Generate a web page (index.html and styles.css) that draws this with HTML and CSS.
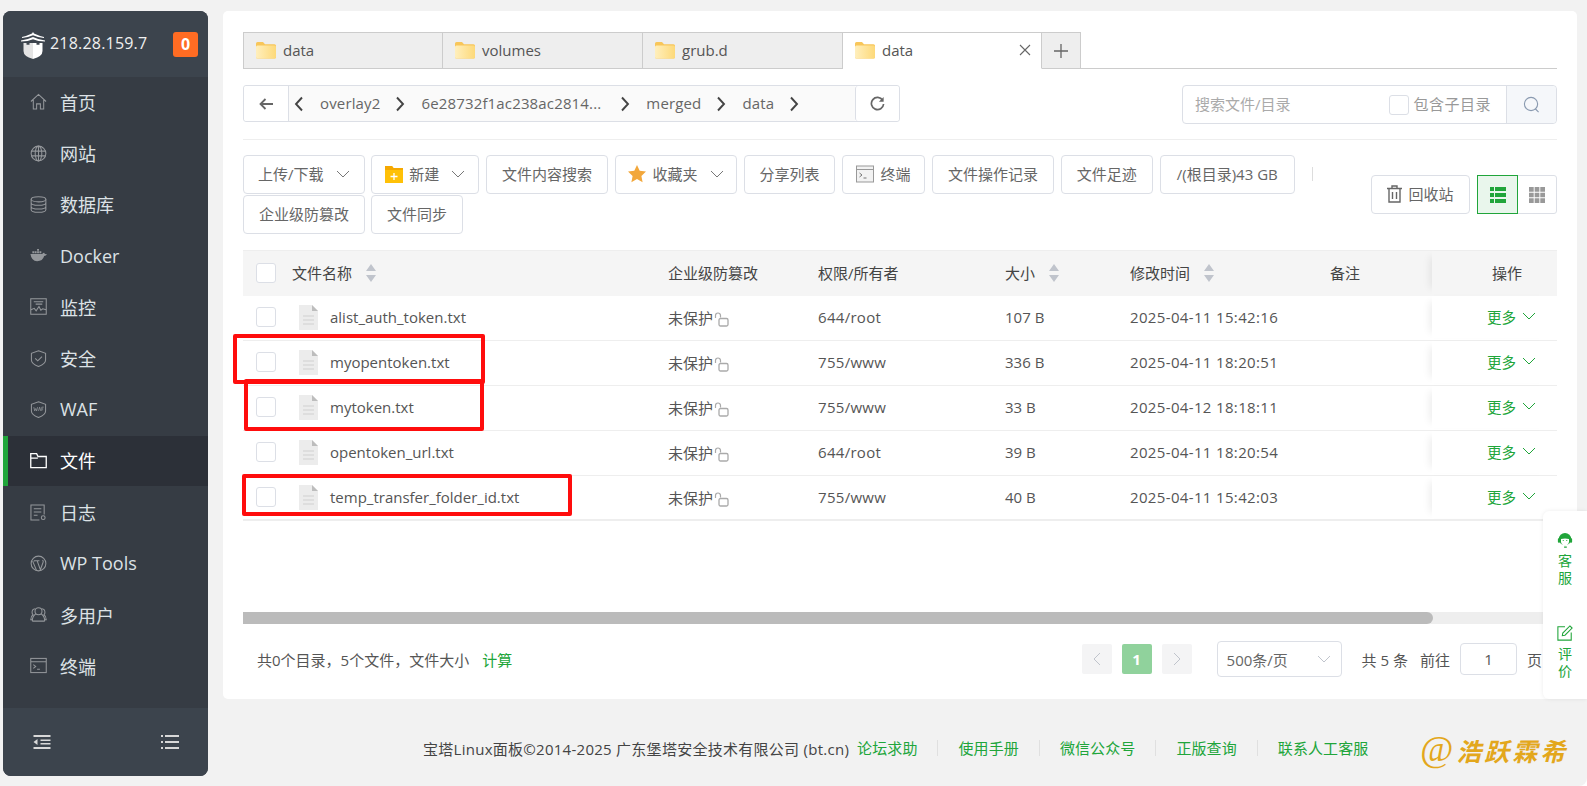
FILE: index.html
```html
<!DOCTYPE html>
<html lang="zh-CN">
<head>
<meta charset="utf-8">
<title>宝塔Linux面板 - 文件</title>
<link rel="stylesheet" href="styles.css">
</head>
<body>
<svg class="defs" width="0" height="0" aria-hidden="true">
  <defs>
    <linearGradient id="fold-g" x1="0" y1="0" x2="1" y2="0">
      <stop offset="0" stop-color="#ffefbd"/>
      <stop offset="1" stop-color="#fdd979"/>
    </linearGradient>
    <symbol id="folder" viewBox="0 0 20 18">
      <path d="M0 2.5Q0 1 1.5 1H7l2 2.2h9.500Q20 3.200 20 4.700V16q0 1.500-1.500 1.500h-17Q0 17.500 0 16Z" fill="#f8c65a"/>
      <path d="M0 6q0-1.500 1.500-1.500h17Q20 4.500 20 6v10q0 1.500-1.500 1.500h-17Q0 17.500 0 16Z" fill="url(#fold-g)"/>
    </symbol>
    <symbol id="doc" viewBox="0 0 19 25">
      <path d="M0 0h13l6 6v19H0Z" fill="#ececec"/>
      <path d="M13 0l6 6h-6Z" fill="#bdbdbd"/>
      <path d="M4 11h11M4 15h11M4 19h11" stroke="#cfcfcf" stroke-width="1.200"/>
    </symbol>
    <symbol id="lock" viewBox="0 0 15 15">
      <path d="M1.500 6V3.500a2.500 2.500 0 0 1 5 0V5.500" fill="none" stroke="#aaa" stroke-width="1.200"/>
      <rect x="5" y="6.500" width="9" height="7.500" rx="1.500" fill="none" stroke="#aaa" stroke-width="1.300"/>
    </symbol>
    <symbol id="chev" viewBox="0 0 14 8">
      <path d="M1 1l6 6 6-6" fill="none" stroke="currentColor" stroke-width="1"/>
    </symbol>
    <symbol id="crumb" viewBox="0 0 10 16">
      <path d="M2 1.500l6 6.500-6 6.500" fill="none" stroke="#444" stroke-width="1.900"/>
    </symbol>
  </defs>
</svg>

<div class="app">
  <aside class="sidebar">
    <div class="side-head">
      <svg class="logo" viewBox="0 0 24 27">
        <path d="M12 0l1 1.600Q18 4 23 5v1Q16.500 5.500 12 3.200 7.500 5.500 1 6V5Q6 4 11 1.600Z" fill="#fff"/>
        <path d="M0 8.500Q7 7.500 12 5q5 2.500 12 3.500v1Q17 9.500 12 7.200 7 9.500 0 9.500Z" fill="#fff"/>
        <path d="M2.500 11h3v1.800h3V11H12v16Q2.500 24.500 2.500 19Z" fill="#e4e4e4"/>
        <path d="M12 11h3.500v1.800h3V11h3v8Q21.500 24.500 12 27Z" fill="#fff"/>
      </svg>
      <span class="ip">218.28.159.7</span>
      <span class="badge">0</span>
    </div>
    <nav class="menu">
      <a class="item"><svg class="mi" viewBox="0 0 18 18"><path d="M1 9l8-7.500L17 9M3.500 7.500V17h3.500v-5.500h4V17h3.500V7.500" /></svg><span>首页</span></a>
      <a class="item"><svg class="mi" viewBox="0 0 18 18"><circle cx="9" cy="9" r="7.800"/><ellipse cx="9" cy="9" rx="3.500" ry="7.800"/><path d="M1.500 6.500h15M1.500 11.500h15M9 1v16"/></svg><span>网站</span></a>
      <a class="item"><svg class="mi" viewBox="0 0 18 18"><ellipse cx="9" cy="3.500" rx="7.800" ry="2.700"/><path d="M1.200 3.500v11c0 1.500 3.500 2.700 7.800 2.700s7.800-1.200 7.800-2.700v-11M1.200 7.200c0 1.500 3.500 2.700 7.800 2.700s7.800-1.200 7.800-2.700M1.200 11c0 1.500 3.500 2.700 7.800 2.700s7.800-1.200 7.800-2.700"/></svg><span>数据库</span></a>
      <a class="item"><svg class="mi mi-fill" viewBox="0 0 18 18"><path d="M5 4.500h2v2H5ZM7.500 4.500h2v2h-2ZM7.500 2h2v2h-2ZM10 4.500h2v2h-2ZM2.500 4.500h2v2h-2Z"/><path d="M.5 7.500h12.500q.5-1.500 2-1.500l.8 1.300q1.500 0 2.200.5-1 1.700-3 1.700Q13.500 15 7.500 15 1.500 15 .5 7.500Z"/></svg><span>Docker</span></a>
      <a class="item"><svg class="mi" viewBox="0 0 18 18"><rect x=".8" y=".8" width="16.400" height="16.400"/><path d="M4 4h10M6 6.500h7M1 12.500l3.500-1.500 2 2.500 3-4.500 2 4 2-1.500 3.500 1"/></svg><span>监控</span></a>
      <a class="item"><svg class="mi" viewBox="0 0 18 18"><path d="M9 .8l7.500 2.700v7q0 4-7.500 7-7.500-3-7.500-7v-7Z"/><path d="M5.500 8.800l2.700 2.700 4.500-4.500"/></svg><span>安全</span></a>
      <a class="item"><svg class="mi" viewBox="0 0 18 18"><path d="M9 .8l7.500 2.700v7q0 4-7.500 7-7.500-3-7.500-7v-7Z"/><path class="waf" d="M4 6.500l1 4 1-2.500 1 2.500 1-4M9 10.500l1.200-4 1.200 4M12.500 10.500v-4h2M12.500 8.500h1.500"/></svg><span>WAF</span></a>
      <a class="item active"><svg class="mi" viewBox="0 0 18 18"><path d="M.8 16.500V1.800H7l1.500 3h8.700v11.700ZM.8 6.500h7.500"/></svg><span>文件</span></a>
      <a class="item"><svg class="mi" viewBox="0 0 18 18"><path d="M10 17H1V1h14v10M4 5h8M4 8.500h8M4 12h4"/><circle cx="14" cy="14.500" r="2"/></svg><span>日志</span></a>
      <a class="item"><svg class="mi" viewBox="0 0 18 18"><circle cx="9" cy="9" r="7.800"/><path d="M2.800 6.500l4 9.500M5 6h5M7.500 6l3.500 9.500 2.600-7q1-2.500-.5-3M4 6.200l1 0"/></svg><span>WP Tools</span></a>
      <a class="item"><svg class="mi" viewBox="0 0 18 18"><circle cx="9" cy="5.500" r="3.700"/><path d="M2.500 16q-.2-5 3.500-7.500M15.500 16q.2-5-3.500-7.500M2.500 16h13M5.500 3Q2 3.500 2.200 7q.1 1.500 1 2.300Q.7 11 .8 14.500h1.500M12.500 3q3.500.5 3.300 4-.1 1.500-1 2.300 2.500 1.700 2.400 5.200h-1.500"/></svg><span>多用户</span></a>
      <a class="item"><svg class="mi" viewBox="0 0 18 18"><rect x=".8" y="1.500" width="16.400" height="15"/><path d="M1 5h16M3.500 8l2.500 2-2.500 2M7.500 13h3"/></svg><span>终端</span></a>
    </nav>
    <div class="side-foot">
      <svg class="fi" viewBox="0 0 17 16"><path d="M0 1h17v2H0ZM7 5.500h10v1.500H7ZM7 9h10v1.500H7ZM0 13h17v2H0ZM0 8l4-3v6Z"/></svg>
      <svg class="fi" viewBox="0 0 18 16"><path d="M0 1h2v2H0ZM0 7h2v2H0ZM0 13h2v2H0ZM4 1h14v2H4ZM4 7h14v2H4ZM4 13h14v2H4Z"/></svg>
    </div>
  </aside>

  <div class="right">
    <main class="panel">
      <div class="tabs">
        <div class="tab"><svg class="folder"><use href="#folder"/></svg><span>data</span></div>
        <div class="tab"><svg class="folder"><use href="#folder"/></svg><span>volumes</span></div>
        <div class="tab"><svg class="folder"><use href="#folder"/></svg><span>grub.d</span></div>
        <div class="tab tab-on"><svg class="folder"><use href="#folder"/></svg><span>data</span>
          <svg class="tab-x" viewBox="0 0 12 12"><path d="M1 1l10 10M11 1L1 11"/></svg></div>
        <div class="tab-add"><svg viewBox="0 0 14 14"><path d="M7 0v14M0 7h14"/></svg></div>
      </div>

      <div class="pathrow">
        <div class="pathbar">
          <button class="p-btn"><svg viewBox="0 0 14 12"><path d="M14 6H2M6.500 1L1.500 6l5 5"/></svg></button>
          <div class="crumbs">
            <svg class="crumb first" viewBox="0 0 10 16"><path d="M8 1.500L2 8l6 6.500" fill="none" stroke="#444" stroke-width="1.900"/></svg>
            <span class="c-t">overlay2</span><svg class="crumb"><use href="#crumb"/></svg>
            <span class="c-t c-long">6e28732f1ac238ac2814...</span><svg class="crumb"><use href="#crumb"/></svg>
            <span class="c-t">merged</span><svg class="crumb"><use href="#crumb"/></svg>
            <span class="c-t">data</span><svg class="crumb"><use href="#crumb"/></svg>
          </div>
          <button class="p-btn p-ref"><svg viewBox="0 0 16 16"><path d="M13.500 4.500A6.500 6.500 0 1 0 14.500 8.500"/><path class="solid" d="M14.500 1v5h-5Z"/></svg></button>
        </div>
        <div class="search">
          <span class="s-ph">搜索文件/目录</span>
          <span class="cb cb-s"></span><span class="s-inc">包含子目录</span>
          <span class="s-btn"><svg viewBox="0 0 18 18"><circle cx="8.500" cy="8.500" r="7"/><path d="M13 13.500l3.500 3.500"/></svg></span>
        </div>
      </div>

      <div class="toolbar">
        <div class="tools">
          <button class="btn btn-1">上传/下载<svg class="chev"><use href="#chev"/></svg></button>
          <button class="btn btn-2"><svg class="ic-new" viewBox="0 0 18 18"><path d="M0 1h7l1.500 2H18v15H0Z" fill="#ffc107"/><path d="M0 1h7l1.500 2H18v2H0Z" fill="#f5a800"/><path d="M9 8v7M5.500 11.500h7" stroke="#fff" stroke-width="1.300"/></svg>新建<svg class="chev"><use href="#chev"/></svg></button>
          <button class="btn btn-3">文件内容搜索</button>
          <button class="btn btn-4"><svg class="ic-star" viewBox="0 0 18 18"><path d="M9 0l2.700 5.800 6.300.8-4.600 4.300 1.200 6.300L9 14.100 3.400 17.200l1.200-6.300L0 6.600l6.300-.8Z" fill="#f2a73b"/></svg>收藏夹<svg class="chev"><use href="#chev"/></svg></button>
          <button class="btn btn-5">分享列表</button>
          <button class="btn btn-6"><svg class="ic-term" viewBox="0 0 18 18"><rect x=".5" y="1" width="17" height="16" fill="#f2f2f2" stroke="#999"/><path d="M1 4.500h16" stroke="#999"/><path d="M3.500 8l2.500 2-2.500 2M7.500 13h3" fill="none" stroke="#777"/></svg>终端</button>
          <button class="btn btn-7">文件操作记录</button>
          <button class="btn btn-8">文件足迹</button>
          <button class="btn btn-9">/(根目录)43 GB</button>
          <span class="tool-sep"></span>
          <button class="btn btn-10">企业级防篡改</button>
          <button class="btn btn-11">文件同步</button>
        </div>
        <div class="tools-r">
          <button class="btn btn-rec"><svg class="ic-rec" viewBox="0 0 15 18"><path d="M0 3.500h15M5 3.500V1h5v2.500M2 3.500V17h11V3.500M5.500 7v7M9.500 7v7"/></svg>回收站</button>
          <div class="view">
            <span class="v v-on"><svg viewBox="0 0 16 16"><path d="M0 0h4v4H0ZM5 0h11v4H5ZM0 6h4v4H0ZM5 6h11v4H5ZM0 12h4v4H0ZM5 12h11v4H5Z"/></svg></span>
            <span class="v"><svg viewBox="0 0 17 17"><path d="M0 0h5v5H0ZM6 0h5v5H6ZM12 0h5v5h-5ZM0 6h5v5H0ZM6 6h5v5H6ZM12 6h5v5h-5ZM0 12h5v5H0ZM6 12h5v5H6ZM12 12h5v5h-5Z"/></svg></span>
          </div>
        </div>
      </div>

      <div class="table">
        <div class="row head">
          <div class="c c-chk"><span class="cb"></span></div>
          <div class="c c-name c-name-h">文件名称<svg class="sort" viewBox="0 0 10 18"><path d="M5 0l5 7H0ZM5 18l5-7H0Z"/></svg></div>
          <div class="c c-prot">企业级防篡改</div>
          <div class="c c-perm">权限/所有者</div>
          <div class="c c-size">大小<svg class="sort" viewBox="0 0 10 18"><path d="M5 0l5 7H0ZM5 18l5-7H0Z"/></svg></div>
          <div class="c c-time">修改时间<svg class="sort" viewBox="0 0 10 18"><path d="M5 0l5 7H0ZM5 18l5-7H0Z"/></svg></div>
          <div class="c c-note">备注</div>
          <div class="c c-op">操作</div>
        </div>
        <div class="row">
          <div class="c c-chk"><span class="cb"></span></div>
          <div class="c c-name"><svg class="doc"><use href="#doc"/></svg><span>alist_auth_token.txt</span></div>
          <div class="c c-prot">未保护<svg class="lock"><use href="#lock"/></svg></div>
          <div class="c c-perm">644/root</div>
          <div class="c c-size">107 B</div>
          <div class="c c-time">2025-04-11 15:42:16</div>
          <div class="c c-note"></div>
          <div class="c c-op"><a class="more">更多<svg class="chev"><use href="#chev"/></svg></a></div>
        </div>
        <div class="row">
          <div class="c c-chk"><span class="cb"></span></div>
          <div class="c c-name"><svg class="doc"><use href="#doc"/></svg><span>myopentoken.txt</span></div>
          <div class="c c-prot">未保护<svg class="lock"><use href="#lock"/></svg></div>
          <div class="c c-perm">755/www</div>
          <div class="c c-size">336 B</div>
          <div class="c c-time">2025-04-11 18:20:51</div>
          <div class="c c-note"></div>
          <div class="c c-op"><a class="more">更多<svg class="chev"><use href="#chev"/></svg></a></div>
        </div>
        <div class="row">
          <div class="c c-chk"><span class="cb"></span></div>
          <div class="c c-name"><svg class="doc"><use href="#doc"/></svg><span>mytoken.txt</span></div>
          <div class="c c-prot">未保护<svg class="lock"><use href="#lock"/></svg></div>
          <div class="c c-perm">755/www</div>
          <div class="c c-size">33 B</div>
          <div class="c c-time">2025-04-12 18:18:11</div>
          <div class="c c-note"></div>
          <div class="c c-op"><a class="more">更多<svg class="chev"><use href="#chev"/></svg></a></div>
        </div>
        <div class="row">
          <div class="c c-chk"><span class="cb"></span></div>
          <div class="c c-name"><svg class="doc"><use href="#doc"/></svg><span>opentoken_url.txt</span></div>
          <div class="c c-prot">未保护<svg class="lock"><use href="#lock"/></svg></div>
          <div class="c c-perm">644/root</div>
          <div class="c c-size">39 B</div>
          <div class="c c-time">2025-04-11 18:20:54</div>
          <div class="c c-note"></div>
          <div class="c c-op"><a class="more">更多<svg class="chev"><use href="#chev"/></svg></a></div>
        </div>
        <div class="row">
          <div class="c c-chk"><span class="cb"></span></div>
          <div class="c c-name"><svg class="doc"><use href="#doc"/></svg><span>temp_transfer_folder_id.txt</span></div>
          <div class="c c-prot">未保护<svg class="lock"><use href="#lock"/></svg></div>
          <div class="c c-perm">755/www</div>
          <div class="c c-size">40 B</div>
          <div class="c c-time">2025-04-11 15:42:03</div>
          <div class="c c-note"></div>
          <div class="c c-op"><a class="more">更多<svg class="chev"><use href="#chev"/></svg></a></div>
        </div>
        <div class="mark mark-1"></div>
        <div class="mark mark-2"></div>
        <div class="mark mark-3"></div>
      </div>

      <div class="scroll"><div class="thumb"></div></div>

      <div class="pager">
        <div class="summary">共0个目录，5个文件，文件大小<a class="calc">计算</a></div>
        <div class="pages">
          <span class="pg pg-off"><svg viewBox="0 0 8 14"><path d="M7 1L1 7l6 6"/></svg></span>
          <span class="pg pg-on">1</span>
          <span class="pg pg-off"><svg viewBox="0 0 8 14"><path d="M1 1l6 6-6 6"/></svg></span>
          <span class="sel"><span>500条/页</span><svg class="chev"><use href="#chev"/></svg></span>
          <span class="total">共 5 条</span>
          <span class="goto">前往</span>
          <span class="pg-input">1</span>
          <span class="goto-end">页</span>
        </div>
      </div>
    </main>

    <footer class="foot">
      <span class="copy">宝塔Linux面板©2014-2025 广东堡塔安全技术有限公司 (bt.cn)</span>
      <a class="fl">论坛求助</a><a class="fl">使用手册</a><a class="fl">微信公众号</a><a class="fl">正版查询</a><a class="fl">联系人工客服</a>
      <span class="wm"><span class="wm-at">@</span>浩跃霖希</span>
    </footer>
  </div>
</div>

<aside class="float">
  <div class="f-block">
    <svg viewBox="0 0 18 18"><circle cx="9" cy="8" r="7" fill="#20a53a"/><rect x="1" y="7" width="2.500" height="5" rx="1" fill="#20a53a"/><rect x="14.500" y="7" width="2.500" height="5" rx="1" fill="#20a53a"/><path d="M4.500 8Q9 6.500 13.500 8v3q-.5 4-4.500 4.500Q5 15 4.500 11Z" fill="#fff"/><path d="M6.500 9.500h1M10.500 9.500h1M8 17h3" stroke="#20a53a" stroke-width="1.200"/></svg>
    <span>客</span><span>服</span>
  </div>
  <div class="f-block f-2">
    <svg viewBox="0 0 18 18"><path d="M9 2H1v15h15V8.500" fill="none" stroke="#20a53a" stroke-width="1.200"/><path d="M14.500 1l2.500 2.500L9 11.500l-3 .5.500-3Z" fill="none" stroke="#20a53a" stroke-width="1.200"/></svg>
    <span>评</span><span>价</span>
  </div>
</aside>
</body>
</html>
```

FILE: styles.css
```css
* { box-sizing: border-box; }
html { background: #fff; }
html, body { margin: 0; padding: 0; height: 100%; }
body {
  width: 1587px; height: 786px; overflow: hidden; position: relative;
  background: #f2f2f2; color: #555; border-bottom-right-radius: 8px;
  font-family: "Open Sans", "Noto Sans CJK SC", sans-serif; font-size: 15px;
}
.defs { position: absolute; }
button { font: inherit; color: inherit; background: #fff; padding: 0; }
.app { display: flex; height: 786px; padding: 11px 10px 10px 3px; gap: 15px; }

/* sidebar */
.sidebar { width: 205px; flex: none; height: 765px; display: flex; flex-direction: column; background: #363c44; border-radius: 8px; overflow: hidden; color: #dfe3e6; }
.side-head { height: 66px; flex: none; background: #3c444d; display: flex; align-items: center; padding: 0 10px 0 18px; }
.logo { width: 24px; height: 27px; flex: none; margin: 2px 5px 0 0; }
.ip { font-size: 16px; letter-spacing: .2px; color: #f0f0f0; flex: 1; padding-bottom: 2px; }
.badge { width: 25px; height: 25px; background: #ff6c23; border-radius: 3px; color: #fff; font-weight: 700; font-size: 16px; display: flex; align-items: center; justify-content: center; }
.menu { flex: 1; }
.item { height: 51.27px; display: flex; align-items: center; padding: 0 0 1.5px 27px; font-size: 18px; gap: 13px; color: #dde2e6; }
.item.active { background: #2c3038; border-left: 5px solid #20a53a; padding-left: 22px; color: #fff; height: 50px; margin-bottom: 1.27px; }
.mi { width: 17px; height: 17px; flex: none; fill: none; stroke: #94979b; stroke-width: 1.1; }
.mi-fill { fill: #94979b; stroke: none; }
.waf { stroke-width: .8; }
.active .mi { stroke: #fff; stroke-width: 1.4; }
.side-foot { height: 68px; flex: none; background: #3c444d; display: flex; align-items: center; justify-content: space-between; padding: 0 29px 0 30px; }
.fi { width: 18px; height: 16px; fill: #d8d8d8; }

/* right */
.right { flex: 1; min-width: 0; display: flex; flex-direction: column; }
.panel { height: 688px; flex: none; background: #fff; border-radius: 5px; padding: 21px 20px 0 20px; }

.tabs { display: flex; height: 37px; border-bottom: 1px solid #ccc; }
.tab { width: 200px; height: 37px; display: flex; align-items: center; gap: 7px; padding: 0 0 2px 12px; background: #eee; border: 1px solid #ccc; border-left-width: 0; color: #555; font-size: 15px; }
.tab:first-child { border-left-width: 1px; }
.tab-on { background: #fff; border-bottom-color: #fff; position: relative; width: 199px; }
.folder { width: 20px; height: 18px; flex: none; }
.tab-x { position: absolute; right: 10px; top: 11px; width: 12px; height: 12px; fill: none; stroke: #666; stroke-width: 1.1; }
.tab-add { width: 39px; height: 37px; background: #eee; border: 1px solid #ccc; border-left-width: 0; display: flex; align-items: center; justify-content: center; }
.tab-add svg { width: 14px; height: 14px; fill: none; stroke: #666; stroke-width: 1.3; }

.pathrow { display: flex; justify-content: space-between; align-items: flex-start; margin-top: 16px; height: 39px; }
.pathbar { width: 657px; height: 37px; border: 1px solid #dcdfe6; border-radius: 3px; display: flex; }
.p-btn { width: 44px; flex: none; border: 0; display: flex; align-items: center; justify-content: center; border-radius: 3px; }
.p-btn svg { width: 14px; height: 12px; fill: none; stroke: #666; stroke-width: 1.8; }
.p-ref { border-left: 1px solid #dcdfe6; }
.p-ref svg { width: 15px; height: 15px; }
.p-ref .solid { fill: #666; stroke: none; }
.crumbs { flex: 1; background: #fafafa; border-left: 1px solid #dcdfe6; display: flex; align-items: center; padding-left: 5px; color: #666; font-size: 15px; letter-spacing: .15px; }
.crumb { width: 10px; height: 16px; flex: none; margin: 0 16px 0 15px; }
.crumb.first { margin: 0 16px 0 0; }
.c-t { white-space: nowrap; padding-bottom: 2px; }
.c-long { margin-right: 4px; }

.search { width: 375px; height: 39px; border: 1px solid #dcdfe6; border-radius: 4px; display: flex; align-items: center; padding-left: 12px; color: #aaa; font-size: 15px; }
.s-ph { flex: 1; padding-bottom: 2px; }
.cb { display: inline-block; width: 20px; height: 20px; border: 1px solid #dcdfe6; border-radius: 3px; background: #fff; }
.cb-s { margin-right: 4px; }
.s-inc { color: #999; margin-right: 15px; letter-spacing: .5px; padding-bottom: 2px; }
.s-btn { width: 50px; height: 37px; background: #f5f7fa; border-left: 1px solid #dcdfe6; display: flex; align-items: center; justify-content: center; border-radius: 0 4px 4px 0; }
.s-btn svg { width: 17px; height: 17px; fill: none; stroke: #8a9ab0; stroke-width: 1.2; }

.toolbar { border-top: 1px solid #eee; margin-top: 15px; padding-top: 15px; display: flex; justify-content: space-between; height: 111px; }
.tools { width: 1080px; display: flex; flex-wrap: wrap; align-content: flex-start; row-gap: 1px; column-gap: 6.75px; }
.btn { height: 39px; border: 1px solid #dcdfe6; border-radius: 4px; display: inline-flex; align-items: center; justify-content: center; gap: 6px; padding-bottom: 2px; color: #666; font-size: 15px; white-space: nowrap; }
.chev { width: 14px; height: 8px; color: #777; flex: none; margin-left: 6px; }
.btn-1 { width: 121.5px; } .btn-2 { width: 108px; } .btn-3 { width: 122px; } .btn-4 { width: 122.5px; }
.btn-5 { width: 91px; } .btn-6 { width: 83.5px; } .btn-7 { width: 122px; } .btn-8 { width: 92px; } .btn-9 { width: 135.5px; }
.btn-10 { width: 122px; } .btn-11 { width: 92px; }
.btn-10 { margin-right: -.75px; }
.ic-new, .ic-star, .ic-term { width: 18px; height: 18px; flex: none; }
.tool-sep { width: 1px; height: 14px; background: #ddd; margin: 12px 0 0 10px; }
.tools-r { display: flex; gap: 7px; padding-top: 20px; }
.btn-rec { width: 99px; }
.ic-rec { width: 15px; height: 18px; fill: none; stroke: #666; stroke-width: 1.4; }
.view { display: flex; height: 39px; width: 80px; border: 1px solid #dcdfe6; border-radius: 3px; }
.v { flex: 1; display: flex; align-items: center; justify-content: center; }
.v svg { width: 16px; height: 16px; fill: #999; }
.v-on { background: #e9f6ec; outline: 1px solid #20a53a; }
.v-on svg { fill: #20a53a; }

.table { position: relative; height: 270px; border-bottom: 1px solid #eee; }
.row { display: flex; height: 45px; align-items: center; padding-bottom: 2px; border-bottom: 1px solid #eee; color: #555; font-size: 15px; }
.row:last-of-type { border-bottom: 0; }
.head { height: 46px; background: #f5f5f5; border: 0; color: #444; border-top: 1px solid #eee; }
.c { flex: none; white-space: nowrap; display: flex; align-items: center; }
.c-chk { width: 49px; padding-left: 13px; }
.c-name { width: 376px; }
.c-name-h { color: #444; }
.c-prot { width: 150px; }
.c-perm { width: 187px; letter-spacing: .3px; }
.c-size { width: 125px; }
.c-time { width: 200px; letter-spacing: .35px; }
.head .c-perm, .head .c-time { letter-spacing: 0; }
.c-note { width: 102px; }
.row .c-name .doc { margin: 0 12px 0 7px; }
.doc { width: 19px; height: 25px; flex: none; }
.lock { width: 15px; height: 15px; flex: none; margin: 5px 0 0 1px; }
.sort { width: 12px; height: 18px; fill: #c0c4cc; margin-left: 13px; }
.c-op { width: 125px; height: 100%; padding: 0 0 0 55px; box-shadow: -8px 0 8px -6px rgba(0,0,0,.08); color: #444; }
.head .c-op { padding-left: 60px; }
.more { color: #20a53a; display: flex; align-items: center; font-size: 14.5px; margin-bottom: 2px; }
.more .chev { color: #20a53a; margin-left: 6px; }
.mark { position: absolute; border: 4px solid #ff0d0d; border-radius: 2px; }
.mark-1 { left: -10px; top: 84px; width: 252px; height: 50px; }
.mark-2 { left: 1px; top: 129px; width: 240px; height: 52px; }
.mark-3 { left: -1px; top: 224px; width: 330px; height: 42px; }

.scroll { height: 12px; background: #eee; margin-top: 92px; }
.thumb { width: 1190px; height: 12px; background: #bbb; border-radius: 0 6px 6px 0; }

.pager { display: flex; justify-content: space-between; align-items: center; height: 70px; padding: 0 0 0 14px; font-size: 15px; color: #555; }
.calc { color: #20a53a; margin-left: 13px; }
.pages { display: flex; align-items: center; }
.pg { width: 30px; height: 30px; background: #f4f4f5; border-radius: 2px; margin-right: 10px; display: flex; align-items: center; justify-content: center; }
.pg svg { width: 8px; height: 14px; fill: none; stroke: #c0c4cc; }
.pg-on { background: #90d29c; color: #fff; font-weight: 700; font-size: 15px; }
.sel { width: 125px; height: 36px; border: 1px solid #dcdfe6; border-radius: 4px; margin: 0 20px 0 15px; display: flex; align-items: center; justify-content: space-between; padding: 0 10px 0 9px; color: #666; }
.sel .chev { color: #c0c4cc; }
.total { margin-right: 12px; }
.goto { margin-right: 10px; }
.pg-input { width: 57px; height: 32px; border: 1px solid #dcdfe6; border-radius: 4px; display: flex; align-items: center; justify-content: center; margin-right: 10px; }
.goto-end { width: 30px; }

.foot { height: 76px; display: flex; align-items: center; font-size: 15px; color: #444; padding: 22px 0 0 200px; position: relative; }
.copy { margin-right: 8px; letter-spacing: .27px; white-space: nowrap; }
.fl { color: #20a53a; padding: 0 20px; border-left: 1px solid #e0e0e0; line-height: 16px; white-space: nowrap; letter-spacing: .1px; }
.copy + .fl { border-left: 0; padding-left: 0; }
.wm { position: absolute; left: 1197px; top: 32px; color: #e3a71c; font-family: "Noto Sans CJK SC", sans-serif; font-size: 25px; line-height: 36px; letter-spacing: 3px; font-style: italic; font-weight: 700; white-space: nowrap; }
.wm-at { font-family: "Liberation Serif", serif; font-weight: 400; font-size: 36px; }

.float { position: absolute; left: 1543px; top: 511px; width: 44px; height: 188px; background: #fff; border-radius: 6px 0 0 6px; box-shadow: 0 0 4px rgba(0,0,0,.08); color: #20a53a; font-size: 14px; display: flex; flex-direction: column; align-items: center; padding-top: 21px; line-height: 16.5px; }
.f-block { display: flex; flex-direction: column; align-items: center; }
.f-block svg { width: 16px; height: 16px; margin-bottom: 5px; }
.f-2 { margin-top: 39px; }
```
